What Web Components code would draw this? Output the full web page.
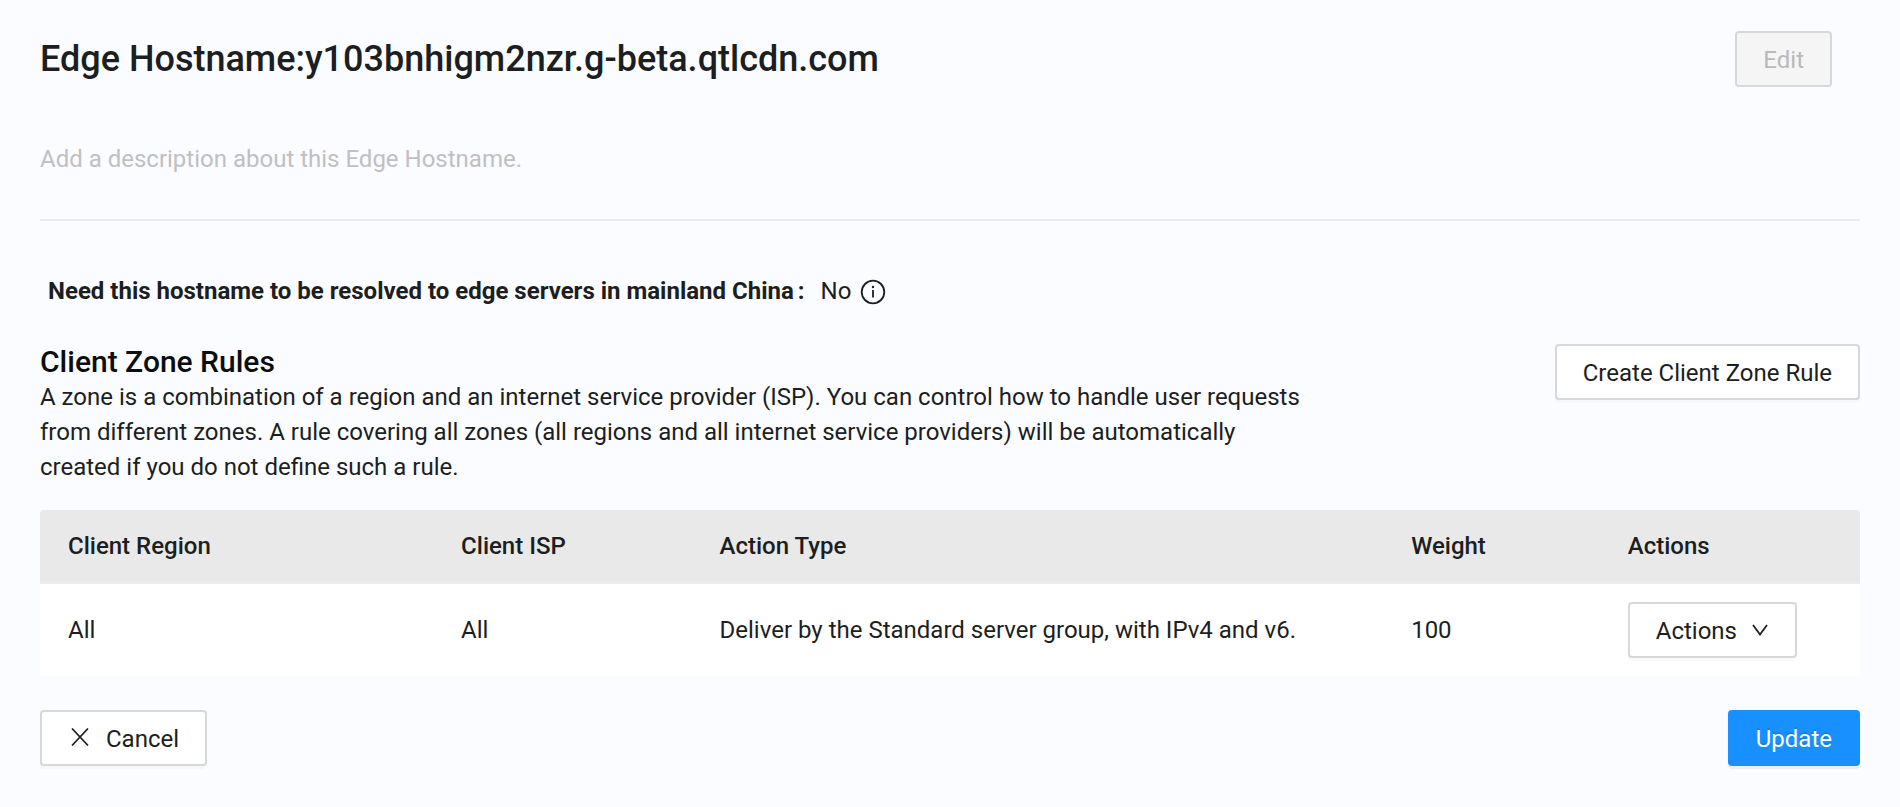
<!DOCTYPE html>
<html lang="en">
<head>
<meta charset="utf-8">
<meta name="viewport" content="width=device-width, initial-scale=1">
<title>Edge Hostname</title>
<style>
  :root {
    --text: #1c1e21;
    --muted: #bfc0c2;
    --line: #ececee;
    --border: #d7d8da;
    --primary: #1890ff;
  }
  body {
    margin: 0;
    background: #fbfcff;
    color: var(--text);
    font: 400 24px/35px Roboto, "Liberation Sans", sans-serif;
  }
</style>
</head>
<body>
<edge-hostname-page></edge-hostname-page>

<template id="ui-button">
  <style>
    :host { display: inline-block; flex: none; }
    button {
      display: flex; align-items: center; gap: 14px;
      box-sizing: border-box; height: 56px; margin: 0; padding: 2px 26px 0;
      border: 2px solid var(--border); border-radius: 4px;
      background: #fff; color: inherit; font: inherit; white-space: nowrap;
      box-shadow: 0 3px 0 rgba(0, 0, 0, .02); cursor: pointer;
    }
    :host([kind="primary"]) button {
      background: var(--primary); border-color: var(--primary); color: #fff;
      text-shadow: 0 -2px 0 rgba(0, 0, 0, .12);
      box-shadow: 0 3px 0 rgba(0, 0, 0, .05);
    }
    button:disabled { background: #f5f5f5; color: #b8b9bb; box-shadow: none; cursor: not-allowed; }
  </style>
  <button type="button"><slot name="before"></slot><span><slot></slot></span><slot name="after"></slot></button>
</template>

<template id="ui-icon">
  <style>
    :host { display: inline-flex; flex: none; }
    svg { display: block; fill: none; stroke: currentColor; stroke-width: 1.8; }
  </style>
</template>

<template id="hostname-header">
  <style>
    :host { display: block; border-bottom: 2px solid var(--line); padding: 31px 0 42px; }
    .top { display: flex; align-items: center; justify-content: space-between; gap: 24px; padding-right: 28px; }
    h1 { margin: 0; font-size: 36px; line-height: 56px; font-weight: 500; overflow-wrap: anywhere; }
    p { margin: 55px 0 0; color: var(--muted); }
  </style>
  <div class="top">
    <h1><slot name="title"></slot></h1>
    <slot name="action"></slot>
  </div>
  <p><slot></slot></p>
</template>

<template id="info-field">
  <style>
    :host { display: flex; flex-wrap: wrap; align-items: center; padding: 0 8px; }
    dl { display: flex; margin: 0; gap: 16px; }
    dt { font-weight: 700; }
    dt::after { content: ":"; margin-left: 4px; }
    dd { margin: 0; display: flex; align-items: center; gap: 9px; }
  </style>
  <dl><dt><slot name="label"></slot></dt><dd><slot></slot></dd></dl>
</template>

<template id="section-intro">
  <style>
    :host { display: flex; align-items: flex-start; justify-content: space-between; gap: 40px; }
    .copy { max-width: 1276px; }
    h2 { margin: 0; color: #0c0d0e; font-size: 30px; line-height: 36px; font-weight: 500; }
    p { margin: 0; }
  </style>
  <div class="copy">
    <h2><slot name="title"></slot></h2>
    <p><slot></slot></p>
  </div>
  <slot name="action"></slot>
</template>

<template id="zone-rules">
  <style>
    :host { display: block; }
    table { width: 100%; border-collapse: separate; border-spacing: 0; table-layout: fixed; background: #fff; border-radius: 4px; overflow: hidden; }
    .region { width: 21.6%; } .isp { width: 14.2%; } .type { width: 38%; } .weight { width: 11.9%; }
    th, td { padding: 18px 28px; text-align: left; }
    th { padding-top: 19px; background: #e9e9e9; font-weight: 500; border-bottom: 2px solid #ececee; }
    td ui-button { display: block; }
  </style>
  <table>
    <colgroup><col class="region"><col class="isp"><col class="type"><col class="weight"><col></colgroup>
    <thead>
      <tr><th scope="col">Client Region</th><th scope="col">Client ISP</th><th scope="col">Action Type</th><th scope="col">Weight</th><th scope="col">Actions</th></tr>
    </thead>
    <tbody>
      <tr>
        <td>All</td><td>All</td><td>Deliver by the Standard server group, with IPv4 and v6.</td><td>100</td>
        <td><ui-button>Actions<ui-icon name="down" slot="after"></ui-icon></ui-button></td>
      </tr>
    </tbody>
  </table>
</template>

<template id="edge-hostname-page">
  <style>
    :host { display: block; padding: 0 40px 42px; }
    info-field { margin-top: 53px; }
    section-intro { margin-top: 35px; }
    zone-rules { margin-top: 25px; }
    footer { display: flex; justify-content: space-between; margin-top: 34px; }
  </style>
  <main>
    <hostname-header>
      <span slot="title">Edge Hostname:y103bnhigm2nzr.g-beta.qtlcdn.com</span>
      <ui-button slot="action" disabled>Edit</ui-button>
      Add a description about this Edge Hostname.
    </hostname-header>
    <info-field>
      <span slot="label">Need this hostname to be resolved to edge servers in mainland China</span>
      No <ui-icon name="info"></ui-icon>
    </info-field>
    <section-intro>
      <span slot="title">Client Zone Rules</span>
      A zone is a combination of a region and an internet service provider (ISP). You can control how to handle user requests from different zones. A rule covering all zones (all regions and all internet service providers) will be automatically created if you do not define such a rule.
      <ui-button slot="action">Create Client Zone Rule</ui-button>
    </section-intro>
    <zone-rules></zone-rules>
  </main>
  <footer>
    <ui-button><ui-icon name="close" slot="before"></ui-icon>Cancel</ui-button>
    <ui-button kind="primary">Update</ui-button>
  </footer>
</template>

<script>
  const ICONS = {
    info: '<svg width="26" height="26" viewBox="0 0 26 26" aria-hidden="true"><circle cx="13" cy="13" r="11.3"/><path d="M13 11v7.500"/><circle cx="13" cy="8" r="1.200" fill="currentColor" stroke="none"/></svg>',
    close: '<svg width="24" height="24" viewBox="0 0 24 24" aria-hidden="true"><path d="M4 1.500 20 18.500M20 1.500 4 18.500"/></svg>',
    down: '<svg width="18" height="18" viewBox="0 0 18 18" aria-hidden="true"><path d="M2 3 9 12.500 16 3"/></svg>'
  };

  class TemplateElement extends HTMLElement {
    constructor() {
      super();
      const template = document.getElementById(this.localName);
      this.attachShadow({ mode: "open" }).append(template.content.cloneNode(true));
    }
  }

  class UiButton extends TemplateElement {
    connectedCallback() {
      this.shadowRoot.querySelector("button").disabled = this.hasAttribute("disabled");
    }
  }

  class UiIcon extends TemplateElement {
    connectedCallback() {
      if (this.shadowRoot.querySelector("svg")) return;
      this.shadowRoot.querySelector("style").insertAdjacentHTML("afterend", ICONS[this.getAttribute("name")] || "");
    }
  }

  customElements.define("ui-icon", UiIcon);
  customElements.define("ui-button", UiButton);
  customElements.define("hostname-header", class extends TemplateElement {});
  customElements.define("info-field", class extends TemplateElement {});
  customElements.define("section-intro", class extends TemplateElement {});
  customElements.define("zone-rules", class extends TemplateElement {});
  customElements.define("edge-hostname-page", class extends TemplateElement {});
</script>
</body>
</html>
